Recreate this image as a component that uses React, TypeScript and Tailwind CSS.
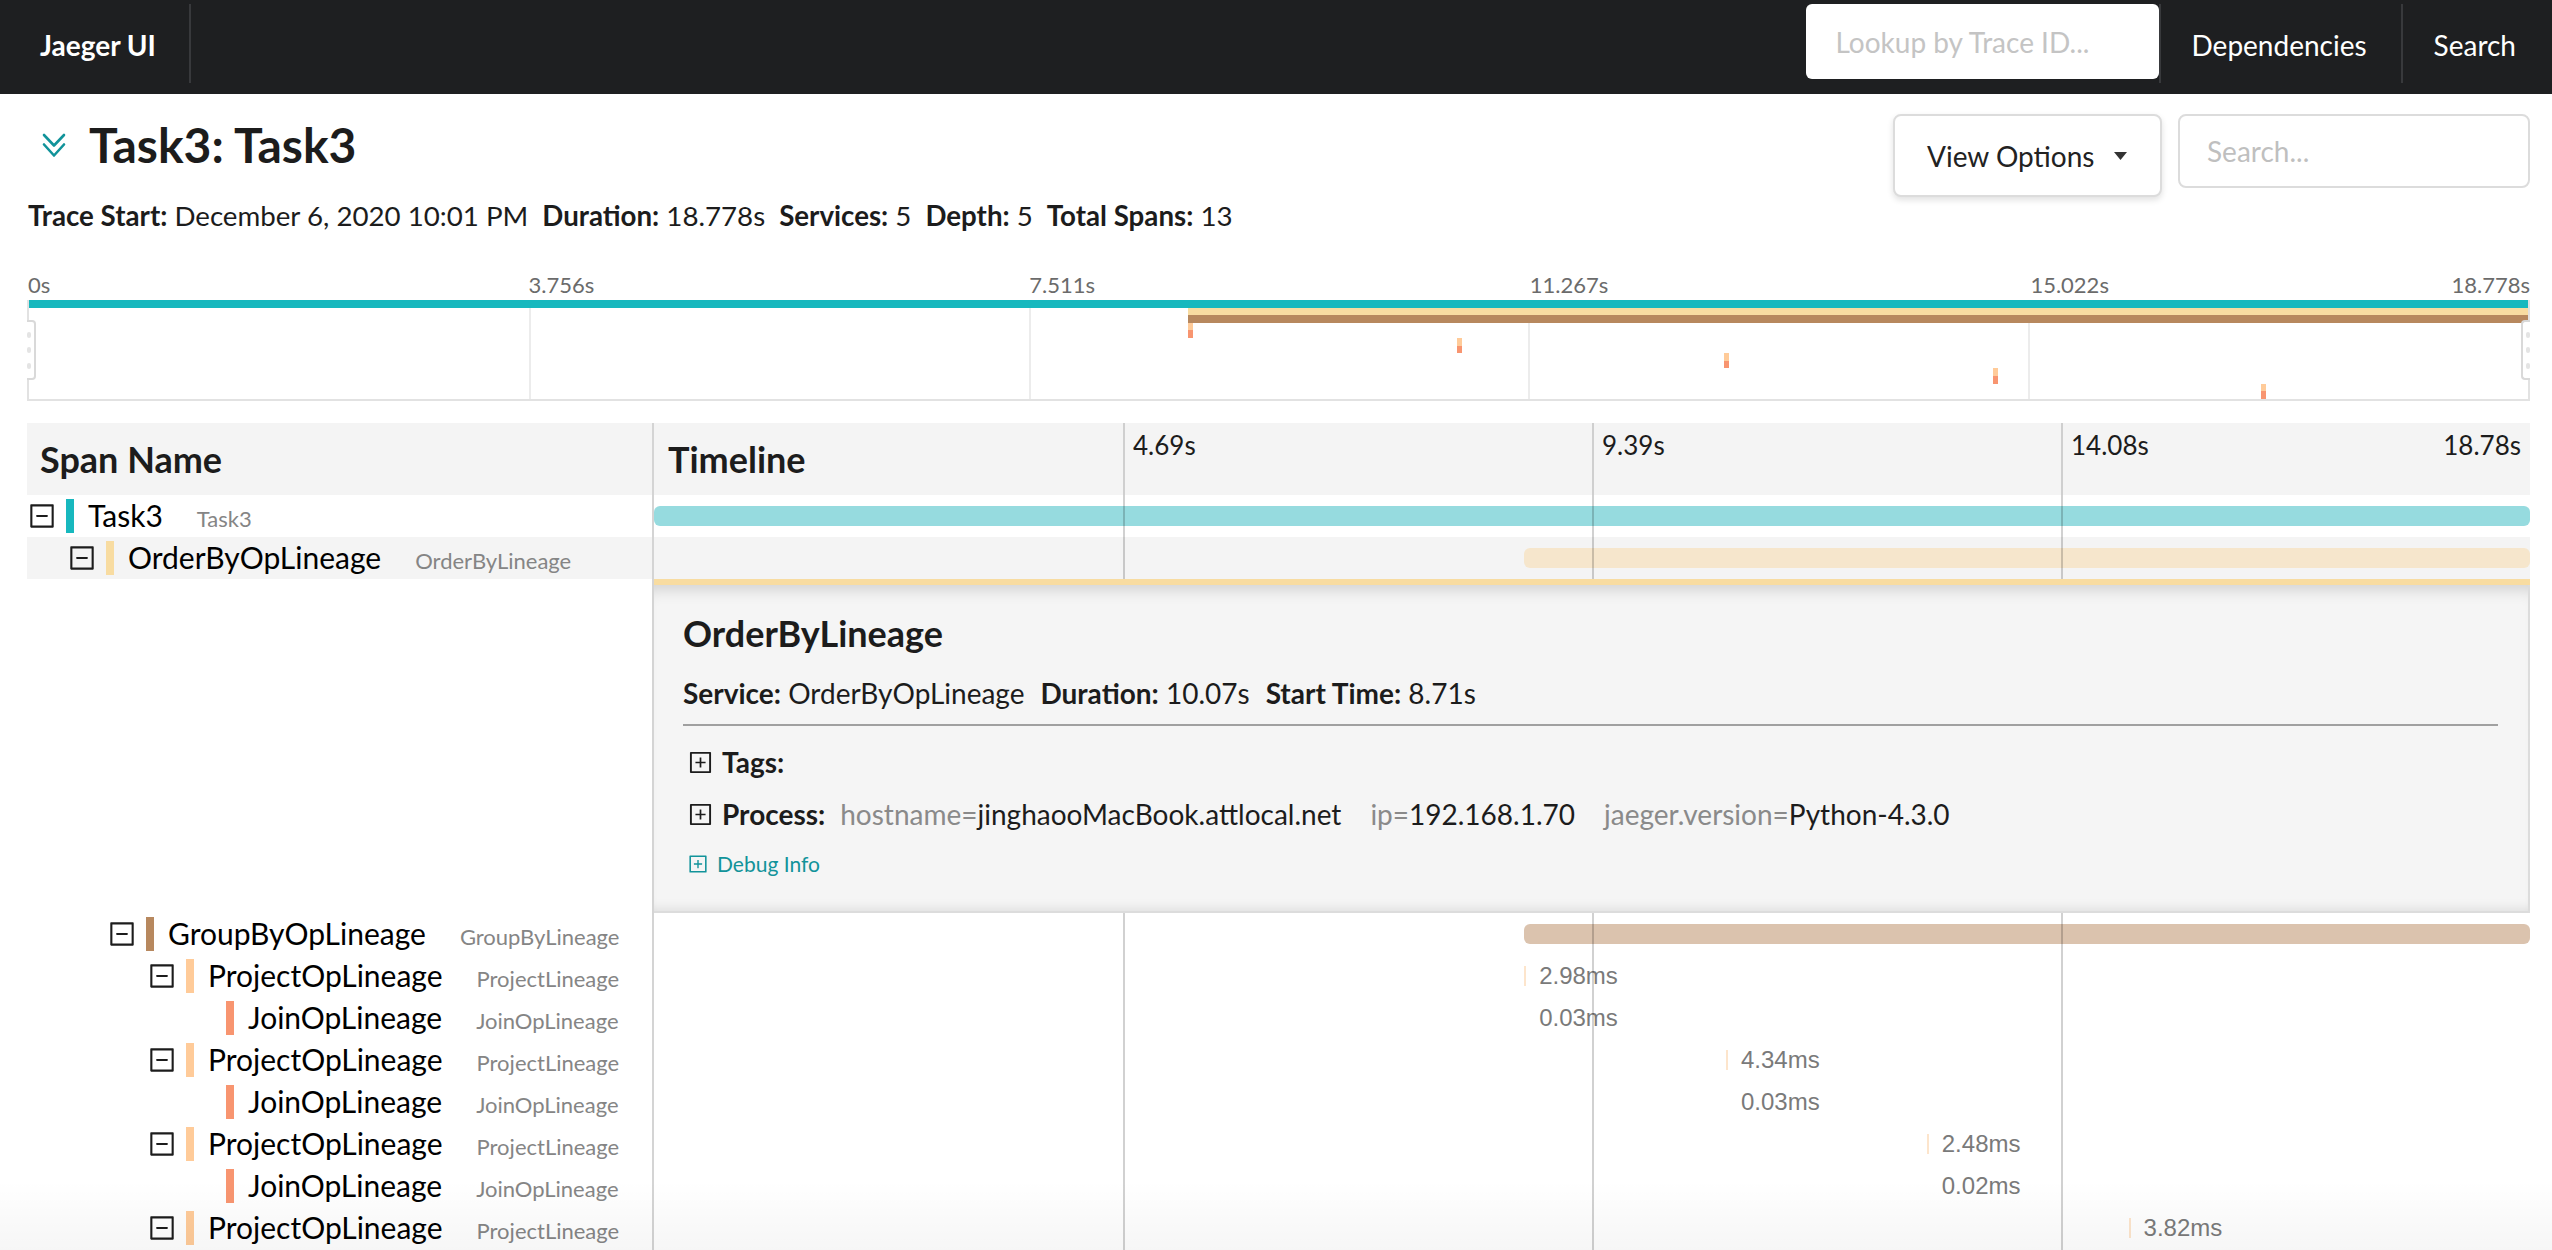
import React from "react";
import { AiOutlineMinusSquare, AiOutlinePlusSquare } from "react-icons/ai";

const TOTAL = 18.778;

type Span = {
  name: string;
  service: string;
  depth: number;
  swatch: string; // solid colour, for name column + minimap
  bar: string; // timeline bar colour
  start: number;
  duration: number;
  hasChildren: boolean;
  label?: string;
  expanded?: boolean;
};

const spans: Span[] = [
  { name: "Task3", service: "Task3", depth: 0, swatch: "bg-[#17b8be]", bar: "bg-[#96dbdf]", start: 0, duration: 18.778, hasChildren: true },
  { name: "OrderByOpLineage", service: "OrderByLineage", depth: 1, swatch: "bg-[#f8dca1]", bar: "bg-[#f6e6cc]", start: 8.71, duration: 10.068, hasChildren: true, expanded: true },
  { name: "GroupByOpLineage", service: "GroupByLineage", depth: 2, swatch: "bg-[#b7885e]", bar: "bg-[#dbc3ae]", start: 8.71, duration: 10.068, hasChildren: true },
  { name: "ProjectOpLineage", service: "ProjectLineage", depth: 3, swatch: "bg-[#ffcb99]", bar: "bg-[#fde5cc]", start: 8.71, duration: 0.00298, hasChildren: true, label: "2.98ms" },
  { name: "JoinOpLineage", service: "JoinOpLineage", depth: 4, swatch: "bg-[#f89570]", bar: "", start: 8.71, duration: 0.00003, hasChildren: false, label: "0.03ms" },
  { name: "ProjectOpLineage", service: "ProjectLineage", depth: 3, swatch: "bg-[#ffcb99]", bar: "bg-[#fde5cc]", start: 10.73, duration: 0.00434, hasChildren: true, label: "4.34ms" },
  { name: "JoinOpLineage", service: "JoinOpLineage", depth: 4, swatch: "bg-[#f89570]", bar: "", start: 10.73, duration: 0.00003, hasChildren: false, label: "0.03ms" },
  { name: "ProjectOpLineage", service: "ProjectLineage", depth: 3, swatch: "bg-[#ffcb99]", bar: "bg-[#fde5cc]", start: 12.74, duration: 0.00248, hasChildren: true, label: "2.48ms" },
  { name: "JoinOpLineage", service: "JoinOpLineage", depth: 4, swatch: "bg-[#f89570]", bar: "", start: 12.74, duration: 0.00002, hasChildren: false, label: "0.02ms" },
  { name: "ProjectOpLineage", service: "ProjectLineage", depth: 3, swatch: "bg-[#ffcb99]", bar: "bg-[#fde5cc]", start: 14.76, duration: 0.00382, hasChildren: true, label: "3.82ms" },
  { name: "JoinOpLineage", service: "JoinOpLineage", depth: 4, swatch: "bg-[#f89570]", bar: "", start: 14.76, duration: 0.00003, hasChildren: false, label: "0.03ms" },
  { name: "ProjectOpLineage", service: "ProjectLineage", depth: 3, swatch: "bg-[#ffcb99]", bar: "bg-[#fde5cc]", start: 16.77, duration: 0.00351, hasChildren: true, label: "3.51ms" },
  { name: "JoinOpLineage", service: "JoinOpLineage", depth: 4, swatch: "bg-[#f89570]", bar: "", start: 16.77, duration: 0.00002, hasChildren: false, label: "0.02ms" },
];

const pct = (v: number) => (v / TOTAL) * 100;

function NavDivider() {
  return <div className="w-[2px] h-[79px] mt-[4px] self-start bg-[#38393c] shrink-0" />;
}

function TopNav() {
  return (
    <nav className="h-[94px] shrink-0 bg-[#1e1f21] flex items-stretch text-white">
      <div className="flex items-center pb-[4px] pl-[40px] pr-[33px] text-[28px] font-bold">Jaeger UI</div>
      <NavDivider />
      <div className="ml-auto flex items-stretch h-full">
        <input
          placeholder="Lookup by Trace ID..."
          className="mt-[4px] h-[75px] w-[353px] bg-white rounded-[6px] px-[30px] text-[28px] text-[#333] placeholder:text-[#c4c4c4] outline-none"
        />
        <NavDivider />
        <a className="flex items-center pb-[4px] pl-[31px] pr-[34px] text-[28px]">Dependencies</a>
        <NavDivider />
        <a className="flex items-center pb-[4px] pl-[31px] pr-[36px] text-[28px]">Search</a>
      </div>
    </nav>
  );
}

function TraceHeader() {
  return (
    <div className="shrink-0">
      <div className="flex justify-between items-start pt-[20px]">
        <div className="flex items-center mt-[2px]">
          <svg viewBox="0 0 24 25" className="ml-[15px] w-[24px] h-[25px]" fill="none" stroke="#11939a" strokeWidth={2.6} strokeLinecap="round" strokeLinejoin="round">
            <polyline points="2,2 12,12.5 22,2" />
            <polyline points="2,11.5 12,22.5 22,11.5" />
          </svg>
          <h1 className="ml-[23px] text-[48px] font-bold leading-[58px] text-[#1c1c1c]">Task3: Task3</h1>
        </div>
        <div className="flex items-start gap-[16px]">
          <button className="h-[83px] w-[269px] flex items-center justify-between pl-[32px] pr-[33px] bg-white border-2 border-[#dcdcdc] rounded-[8px] shadow-[0_3px_6px_rgba(0,0,0,0.12)] text-[28px] text-[#222]">
            View Options
            <svg viewBox="0 0 13 8" className="w-[13px] h-[8px]">
              <polygon points="0,0 13,0 6.5,8" fill="#333" />
            </svg>
          </button>
          <input
            placeholder="Search..."
            className="h-[74px] w-[352px] border-2 border-[#dcdcdc] rounded-[8px] px-[27px] text-[28px] placeholder:text-[#bfbfbf] outline-none"
          />
        </div>
      </div>
      <div className="mt-[2px] pl-[1px] flex gap-[14px] text-[27.7px] leading-[34px] text-[#1c1c1c]">
        <span><b>Trace Start:</b> December 6, 2020 10:01 PM</span>
        <span><b>Duration:</b> 18.778s</span>
        <span><b>Services:</b> 5</span>
        <span><b>Depth:</b> 5</span>
        <span><b>Total Spans:</b> 13</span>
      </div>
    </div>
  );
}

function Handle({ side }: { side: "left" | "right" }) {
  return (
    <div
      className={
        side === "left"
          ? "absolute left-[-2px] top-[20px] w-[9px] h-[60px] rounded-r-[4px] border-2 border-l-0 border-[#d9d9d9] bg-white flex flex-col justify-evenly items-start"
          : "absolute right-[-2px] top-[20px] w-[9px] h-[60px] rounded-l-[4px] border-2 border-r-0 border-[#d9d9d9] bg-white flex flex-col justify-evenly items-end"
      }
    >
      <span className="w-[4px] h-[6px] rounded-full bg-[#e4e4e4]" />
      <span className="w-[4px] h-[6px] rounded-full bg-[#e4e4e4]" />
      <span className="w-[4px] h-[6px] rounded-full bg-[#e4e4e4]" />
    </div>
  );
}

function Minimap() {
  return (
    <div className="mt-[39px] shrink-0">
      <div className="grid grid-cols-5 h-[26px] text-[22px] leading-[26px] text-[#6b6b6b]">
        <div className="pl-[1px]">0s</div>
        <div className="pl-[1px]">3.756s</div>
        <div className="pl-[1px]">7.511s</div>
        <div className="pl-[1px]">11.267s</div>
        <div className="pl-[1px] flex justify-between">
          <span>15.022s</span>
          <span>18.778s</span>
        </div>
      </div>
      <div className="relative mt-[2px] h-[101px] border-x-2 border-b-2 border-[#e2e2e2]">
        <div className="absolute inset-0 grid grid-cols-5">
          <div />
          <div className="border-l-2 border-[#ececec]" />
          <div className="border-l-2 border-[#ececec]" />
          <div className="border-l-2 border-[#ececec]" />
          <div className="border-l-2 border-[#ececec]" />
        </div>
        <div className="relative h-full flex flex-col">
          {spans.map((s, i) => (
            <div key={i} className="relative flex-1">
              <div
                className={`absolute inset-y-0 ${s.swatch}`}
                style={{ left: `${pct(s.start)}%`, width: `max(5px, ${pct(s.duration)}%)` }}
              />
            </div>
          ))}
        </div>
        <Handle side="left" />
        <Handle side="right" />
      </div>
    </div>
  );
}

function TickOverlay() {
  return (
    <div className="absolute inset-0 grid grid-cols-4 pointer-events-none">
      <div />
      <div className="border-l-2 border-black/[0.18]" />
      <div className="border-l-2 border-black/[0.18]" />
      <div className="border-l-2 border-black/[0.18]" />
    </div>
  );
}

function SpanRow({ span }: { span: Span }) {
  const left = pct(span.start);
  const rowBg = span.expanded ? "bg-[#f4f4f4]" : "bg-white";
  return (
    <div className={`grid grid-cols-[625px_1fr] h-[42px] ${rowBg}`}>
      <div className="flex items-center pl-[4px] overflow-hidden">
        {Array.from({ length: span.depth }).map((_, i) => (
          <span key={i} className="w-[40px] shrink-0" />
        ))}
        <span className="w-[22px] shrink-0 flex items-center justify-center text-[#1c1c1c]">
          {span.hasChildren && <AiOutlineMinusSquare size={30} className="shrink-0" />}
        </span>
        <span className={`ml-[13px] w-[8px] h-[34px] shrink-0 ${span.swatch}`} />
        <span className="ml-[14px] flex items-baseline whitespace-nowrap">
          <span className="text-[30px] leading-[36px] text-black">{span.name}</span>
          <span className="ml-[34px] text-[22px] text-[#858585]">{span.service}</span>
        </span>
      </div>
      <div className="relative border-l-2 border-[#d4d4d4]">
        {span.label ? (
          <div className="absolute inset-y-0 flex items-center" style={{ left: `${left}%` }}>
            <span className={`w-[2px] h-[20px] ${span.bar}`} />
            <span className="ml-[13px] text-[24px] text-[#7a7a7a] font-['Liberation_Sans',Arial,sans-serif]">{span.label}</span>
          </div>
        ) : (
          <div
            className={`absolute top-[11px] h-[20px] rounded-[6px] ${span.bar}`}
            style={{ left: `${left}%`, width: `${pct(span.duration)}%` }}
          />
        )}
        <TickOverlay />
      </div>
    </div>
  );
}

function DetailRow() {
  return (
    <div className="grid grid-cols-[625px_1fr]">
      <div className="bg-white" />
      <div className="border-l-2 border-[#d4d4d4]">
        <div className="border-t-[6px] border-[#f8dca1]">
          <div className="bg-[#f5f5f5] border-r-2 border-b-2 border-[#dcdcdc] shadow-[inset_0_16px_16px_-12px_rgba(0,0,0,0.16),inset_0_-12px_12px_-10px_rgba(0,0,0,0.1)] pl-[29px] pr-[30px] pt-[26px] pb-[33px] text-[28px] leading-[34px] text-[#1c1c1c]">
            <div className="text-[36px] leading-[44px] font-bold">OrderByLineage</div>
            <div className="mt-[21px] flex gap-[16px]">
              <span><b>Service:</b> OrderByOpLineage</span>
              <span><b>Duration:</b> 10.07s</span>
              <span><b>Start Time:</b> 8.71s</span>
            </div>
            <div className="mt-[14px] border-t-2 border-[#a0a0a0]" />
            <div className="mt-[19px] flex items-center">
              <AiOutlinePlusSquare size={27} className="ml-[4px]" />
              <b className="ml-[8px]">Tags:</b>
            </div>
            <div className="mt-[18px] flex items-center whitespace-nowrap">
              <AiOutlinePlusSquare size={27} className="ml-[4px]" />
              <b className="ml-[8px]">Process:</b>
              <span className="ml-[15px]"><span className="text-[#8a8a8a]">hostname=</span>jinghaooMacBook.attlocal.net</span>
              <span className="ml-[29px]"><span className="text-[#8a8a8a]">ip=</span>192.168.1.70</span>
              <span className="ml-[29px]"><span className="text-[#8a8a8a]">jaeger.version=</span>Python-4.3.0</span>
            </div>
            <div className="mt-[19px] flex items-center text-[21px] leading-[28px] text-[#11939a]">
              <AiOutlinePlusSquare size={22} className="ml-[4px]" />
              <span className="ml-[8px]">Debug Info</span>
            </div>
          </div>
        </div>
      </div>
    </div>
  );
}

function SpanTable() {
  return (
    <div className="mt-[22px] flex-1 min-h-0 overflow-hidden">
      <div className="grid grid-cols-[625px_1fr] h-[72px] bg-[#f4f4f4] text-[#1c1c1c]">
        <div className="flex items-center pl-[13px] text-[36px] font-bold">Span Name</div>
        <div className="grid grid-cols-4 border-l-2 border-[#d4d4d4]">
          <div className="flex items-center pl-[14px] text-[36px] font-bold">Timeline</div>
          <div className="border-l-2 border-[#cfcfcf] pl-[8px] pt-[6px] text-[26px] leading-[32px]">4.69s</div>
          <div className="border-l-2 border-[#cfcfcf] pl-[8px] pt-[6px] text-[26px] leading-[32px]">9.39s</div>
          <div className="border-l-2 border-[#cfcfcf] pl-[8px] pr-[9px] pt-[6px] text-[26px] leading-[32px] flex justify-between items-start">
            <span>14.08s</span>
            <span>18.78s</span>
          </div>
        </div>
      </div>
      {spans.map((s, i) => (
        <React.Fragment key={i}>
          <SpanRow span={s} />
          {s.expanded && <DetailRow />}
        </React.Fragment>
      ))}
    </div>
  );
}

export default function App() {
  return (
    <div className="relative h-screen overflow-hidden flex flex-col bg-white text-[#1c1c1c] font-[Lato,'Noto_Sans',sans-serif]">
      <TopNav />
      <div className="flex-1 min-h-0 flex flex-col pl-[27px] pr-[22px]">
        <TraceHeader />
        <Minimap />
        <SpanTable />
      </div>
      <div className="pointer-events-none absolute inset-x-0 bottom-0 h-[70px] bg-gradient-to-b from-transparent to-black/[0.035]" />
    </div>
  );
}
